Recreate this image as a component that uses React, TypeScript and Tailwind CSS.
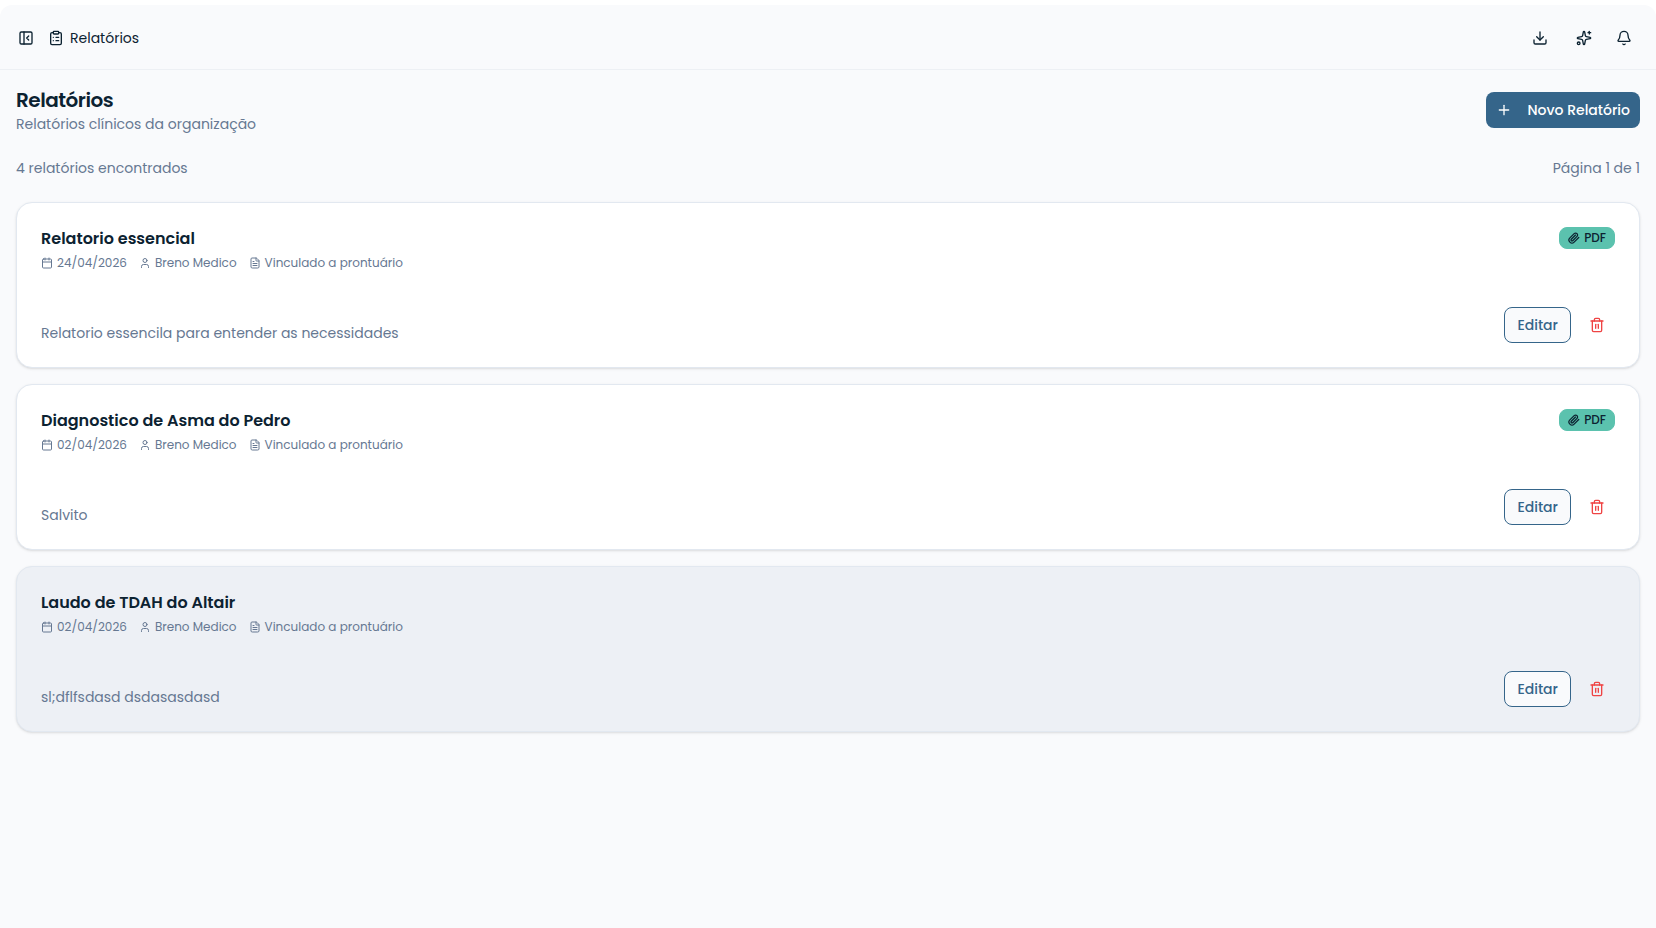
import {
  Bell,
  Calendar,
  ClipboardList,
  Download,
  FileText,
  PanelLeftClose,
  Plus,
  Sparkles,
  Trash2,
  User,
} from "lucide-react";

interface Report {
  title: string;
  date: string;
  author: string;
  summary: string;
  pdf: boolean;
}

const reports: Report[] = [
  {
    title: "Relatorio essencial",
    date: "24/04/2026",
    author: "Breno Medico",
    summary: "Relatorio essencila para entender as necessidades",
    pdf: true,
  },
  {
    title: "Diagnostico de Asma do Pedro",
    date: "02/04/2026",
    author: "Breno Medico",
    summary: "Salvito",
    pdf: true,
  },
  {
    title: "Laudo de TDAH do Altair",
    date: "02/04/2026",
    author: "Breno Medico",
    summary: "sl;dflfsdasd dsdasasdasd",
    pdf: false,
  },
];

function PaperclipIcon() {
  return (
    <svg
      className="size-3"
      viewBox="0 0 24 24"
      fill="none"
      stroke="currentColor"
      strokeWidth="2.5"
      strokeLinecap="round"
      strokeLinejoin="round"
      aria-hidden="true"
    >
      <path d="m21.44 11.05-9.19 9.19a6 6 0 0 1-8.49-8.49l8.57-8.57A4 4 0 1 1 18 8.84l-8.59 8.57a2 2 0 0 1-2.83-2.83l8.49-8.48" />
    </svg>
  );
}

function ReportCard({ report }: { report: Report }) {
  return (
    <article
      className={`flex flex-col gap-9 rounded-2xl border border-[#e2e8f0] p-6 shadow-sm ${
        report.pdf ? "bg-white" : "bg-[#edf0f5]"
      }`}
    >
      <div className="flex items-start justify-between">
        <div>
          <h2 className="text-base leading-6 font-semibold">{report.title}</h2>
          <div className="mt-1 flex items-center gap-3 text-xs text-[#667892]">
            <span className="flex items-center gap-1">
              <Calendar size={12} />
              {report.date}
            </span>
            <span className="flex items-center gap-1">
              <User size={12} />
              {report.author}
            </span>
            <span className="flex items-center gap-1">
              <FileText size={12} />
              Vinculado a prontuário
            </span>
          </div>
        </div>
        {report.pdf && (
          <span className="flex items-center gap-1 rounded-lg border border-[#5bc2ae] bg-[#5bc2ae] px-2 py-0.5 text-xs font-medium">
            <PaperclipIcon />
            PDF
          </span>
        )}
      </div>
      <div className="flex items-end justify-between">
        <p className="text-sm text-[#667892]">{report.summary}</p>
        <div className="flex gap-2">
          <button className="h-9 rounded-lg border border-[#35658a] bg-[#f9fafc] px-3 text-sm font-medium text-[#35658a]">
            Editar
          </button>
          <button
            aria-label="Excluir"
            className="flex size-9 items-center justify-center text-[#ef4444]"
          >
            <Trash2 size={16} />
          </button>
        </div>
      </div>
    </article>
  );
}

export default function App() {
  return (
    <div className="min-h-screen bg-white pt-[5px] font-['Poppins','Inter',sans-serif] text-[#0c2231]">
      <div className="min-h-[calc(100vh-5px)] rounded-t-xl bg-[#f9fafc]">
        <header className="flex h-[65px] items-center justify-between border-b border-[#edf0f4] pt-0.5 pr-6 pl-[18px]">
          <div className="flex items-center gap-[14px]">
            <button aria-label="Recolher menu">
              <PanelLeftClose size={16} />
            </button>
            <div className="flex items-center gap-[6px] text-sm">
              <ClipboardList size={16} />
              <span>Relatórios</span>
            </div>
          </div>
          <div className="flex items-center gap-6">
            <button aria-label="Baixar" className="mr-1">
              <Download size={16} />
            </button>
            <button aria-label="Assistente">
              <Sparkles size={16} />
            </button>
            <button aria-label="Notificações">
              <Bell size={16} />
            </button>
          </div>
        </header>
        <main className="flex flex-col gap-6 p-4">
          <div className="flex items-center justify-between">
            <div>
              <h1 className="text-xl leading-7 font-semibold tracking-tight">Relatórios</h1>
              <p className="text-sm text-[#667892]">Relatórios clínicos da organização</p>
            </div>
            <button className="flex h-9 items-center gap-4 rounded-lg bg-[#35658a] px-[10px] text-sm font-medium text-white">
              <Plus size={16} />
              Novo Relatório
            </button>
          </div>
          <div className="flex justify-between text-sm text-[#667892]">
            <span>4 relatórios encontrados</span>
            <span>Página 1 de 1</span>
          </div>
          <div className="flex flex-col gap-4">
            {reports.map((report) => (
              <ReportCard key={report.title} report={report} />
            ))}
          </div>
        </main>
      </div>
    </div>
  );
}
